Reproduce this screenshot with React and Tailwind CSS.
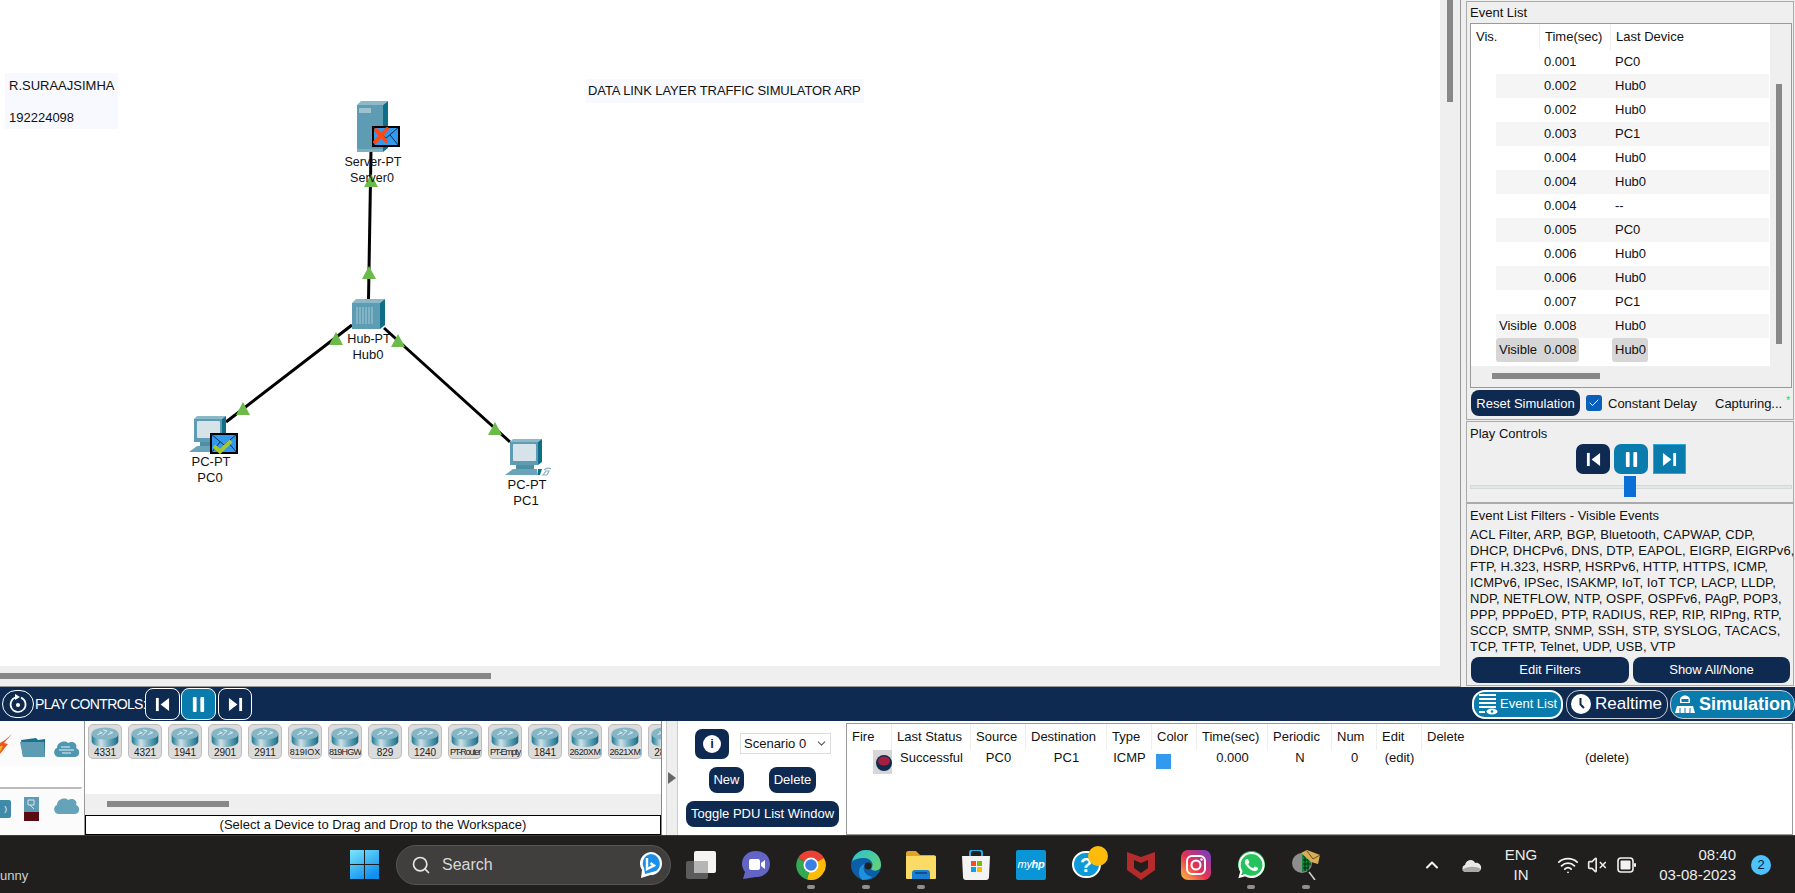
import React from "react";
import { Search, Wifi, VolumeX, ChevronUp, ChevronDown, Check } from "lucide-react";
import { FaWhatsapp } from "react-icons/fa";

const events = [
  ["", "0.001", "PC0"], ["", "0.002", "Hub0"], ["", "0.002", "Hub0"], ["", "0.003", "PC1"],
  ["", "0.004", "Hub0"], ["", "0.004", "Hub0"], ["", "0.004", "--"], ["", "0.005", "PC0"],
  ["", "0.006", "Hub0"], ["", "0.006", "Hub0"], ["", "0.007", "PC1"], ["Visible", "0.008", "Hub0"],
];

const filterLines = [
  "ACL Filter, ARP, BGP, Bluetooth, CAPWAP, CDP,",
  "DHCP, DHCPv6, DNS, DTP, EAPOL, EIGRP, EIGRPv6,",
  "FTP, H.323, HSRP, HSRPv6, HTTP, HTTPS, ICMP,",
  "ICMPv6, IPSec, ISAKMP, IoT, IoT TCP, LACP, LLDP,",
  "NDP, NETFLOW, NTP, OSPF, OSPFv6, PAgP, POP3,",
  "PPP, PPPoED, PTP, RADIUS, REP, RIP, RIPng, RTP,",
  "SCCP, SMTP, SNMP, SSH, STP, SYSLOG, TACACS,",
  "TCP, TFTP, Telnet, UDP, USB, VTP",
];

const devices = [
  ["4331", "text-[10px]"], ["4321", "text-[10px]"], ["1941", "text-[10px]"], ["2901", "text-[10px]"],
  ["2911", "text-[10px]"], ["819IOX", "text-[9px]"], ["819HGW", "text-[9px] tracking-[-0.8px]"],
  ["829", "text-[10px]"], ["1240", "text-[10px]"], ["PT-Router", "text-[9px] tracking-[-1.2px]"],
  ["PT-Empty", "text-[9px] tracking-[-1.2px]"], ["1841", "text-[10px]"],
  ["2620XM", "text-[9px] tracking-[-0.4px]"], ["2621XM", "text-[9px] tracking-[-0.4px]"], ["2811", "text-[10px]"],
];

function Tri({ x, y }) {
  return <polygon points={`${x},${y} ${x - 7},${y + 13} ${x + 7},${y + 13}`} fill="#6cbb4a" />;
}

function Envelope({ x, y, mark }) {
  return (
    <g transform={`translate(${x} ${y})`}>
      <rect x="1" y="1" width="26" height="19" fill="#3399ee" stroke="#000" strokeWidth="2" />
      <path d="M1 1 L14 12 L27 1 M1 20 L10 9 M27 20 L18 9" fill="none" stroke="#06223f" strokeWidth="0.9" />
      {mark === "x" ? (
        <path d="M3 16 L15 3 M4 4 L14 15" stroke="#ff4712" strokeWidth="4" strokeLinecap="round" />
      ) : (
        <path d="M4 13 L10 18.5 L21 8" fill="none" stroke="#a5c82c" strokeWidth="4" />
      )}
    </g>
  );
}

function PcIcon({ x, y }) {
  return (
    <g transform={`translate(${x} ${y})`}>
      <polygon points="0,3 3,0 32,0 28,3" fill="#8cb9c7" />
      <polygon points="28,3 32,0 32,23 28,26" fill="#0f6e88" />
      <rect x="0" y="3" width="28" height="23" fill="#5d9cb3" />
      <rect x="3" y="5" width="23" height="17" rx="1" fill="#d6e4ea" />
      <rect x="6" y="26" width="18" height="4" fill="#4e8ea6" />
      <polygon points="3,30 27,30 28,36 -5,36" fill="#6aa4b8" />
      <polygon points="28,30 32,30 30,36 28,36" fill="#0f6e88" />
      <path d="M34 31 q4 -3 7 -1 M33 36 l3 -4 h3 l-2 4 z" fill="none" stroke="#88b3c2" strokeWidth="1.2" />
    </g>
  );
}

function Diagram() {
  const labelClass = "fill-[#111]";
  return (
    <svg width="1440" height="666" className="absolute left-0 top-0" fontFamily="Liberation Sans, sans-serif" fontSize="13">
      <g stroke="#000" strokeWidth="3">
        <line x1="371" y1="150" x2="368.5" y2="300" />
        <line x1="352" y1="325" x2="226" y2="422" />
        <line x1="384" y1="328" x2="510" y2="442" />
      </g>
      <polygon points="357,105 361,101 388,101 383,105" fill="#8cb9c7" />
      <polygon points="383,105 388,101 388,148 383,152" fill="#0f6e88" />
      <rect x="357" y="105" width="26" height="47" fill="#5d9cb3" />
      <rect x="359" y="108" width="12" height="5" fill="#9cc2d0" />
      <rect x="357" y="149" width="26" height="3" fill="#7fb0c2" />
      <polygon points="352,303 356,299 385,299 380,303" fill="#8cb9c7" />
      <polygon points="380,303 385,299 385,325 380,329" fill="#0f6e88" />
      <rect x="352" y="303" width="28" height="26" fill="#5d9cb3" />
      <path d="M357 307 v17 M360 307 v17 M363 307 v17 M366 307 v17 M369 307 v17 M372 307 v17" stroke="#a9cbd7" strokeWidth="1" />
      <PcIcon x={194} y={416} />
      <PcIcon x={510} y={439} />
      <Tri x={371} y={174} />
      <Tri x={369} y={266} />
      <Tri x={336} y={332} />
      <Tri x={398} y={334} />
      <Tri x={243} y={402} />
      <Tri x={495} y={422} />
      <text x="373" y="166" textAnchor="middle" fontSize="12.5" className={labelClass}>Server-PT</text>
      <text x="372" y="182" textAnchor="middle" fontSize="12.5" className={labelClass}>Server0</text>
      <text x="369" y="343" textAnchor="middle" fontSize="12.6" className={labelClass}>Hub-PT</text>
      <text x="368" y="359" textAnchor="middle" className={labelClass}>Hub0</text>
      <text x="211" y="466" textAnchor="middle" className={labelClass}>PC-PT</text>
      <text x="210" y="482" textAnchor="middle" className={labelClass}>PC0</text>
      <text x="527" y="489" textAnchor="middle" className={labelClass}>PC-PT</text>
      <text x="526" y="505" textAnchor="middle" className={labelClass}>PC1</text>
      <Envelope x={372} y={126} mark="x" />
      <Envelope x={210} y={433} mark="check" />
    </svg>
  );
}

function Back({ size = 16 }) {
  return (
    <svg width={size} height={size} viewBox="0 0 16 16" fill="#fff">
      <rect x="1" y="1" width="3" height="14" />
      <polygon points="15,1 15,15 6,8" />
    </svg>
  );
}
function Forward({ size = 16 }) {
  return (
    <svg width={size} height={size} viewBox="0 0 16 16" fill="#fff">
      <rect x="12" y="1" width="3" height="14" />
      <polygon points="1,1 1,15 10,8" />
    </svg>
  );
}
function Pause({ size = 16 }) {
  return (
    <svg width={size} height={size} viewBox="0 0 16 16" fill="#fff">
      <rect x="2" y="0" width="4" height="16" rx="1" />
      <rect x="10" y="0" width="4" height="16" rx="1" />
    </svg>
  );
}

function Router() {
  return (
    <svg width="30" height="21" viewBox="0 0 30 21">
      <defs>
        <linearGradient id="routerBody" x1="0" x2="1" y1="0" y2="0">
          <stop offset="0" stopColor="#1d7a94" />
          <stop offset="0.35" stopColor="#cfe2e8" />
          <stop offset="0.65" stopColor="#6ea9bd" />
          <stop offset="1" stopColor="#156c86" />
        </linearGradient>
      </defs>
      <path d="M1 7 V15 C1 23 29 23 29 15 V7 Z" fill="url(#routerBody)" />
      <ellipse cx="15" cy="7" rx="14" ry="6.5" fill="#86b6c6" />
      <path d="M7 8 l5 -2 M9 5 l3 1 M18 8 l5 -2 M20 5 l3 1 M12 9 l5 -5 M13 3 l4 1" stroke="#e4f0f4" strokeWidth="1" fill="none" />
    </svg>
  );
}

function DeviceCard({ name, label }) {
  return (
    <div className="w-[34px] h-[35px] shrink-0 rounded-[5px] bg-[#dcdcdc] border border-[#bdbdbd] flex flex-col items-center pt-[2px] overflow-hidden">
      <Router />
      <span className={`leading-[11px] text-[#222] whitespace-nowrap ${label}`}>{name}</span>
    </div>
  );
}

function NavyButton({ className, children }) {
  return (
    <div className={`flex items-center justify-center rounded-[8px] bg-[#0f2a50] text-white text-[13px] ${className}`}>{children}</div>
  );
}

function EventTable() {
  return (
    <div className="w-[299px] h-[342px] bg-white text-[13px] text-[#111] overflow-hidden">
      <div className="h-[26px] flex items-center">
        <div className="w-[69px] pl-[5px] h-full flex items-center border-r border-[#eeeeee]">Vis.</div>
        <div className="w-[71px] pl-[5px] h-full flex items-center border-r border-[#eeeeee]">Time(sec)</div>
        <div className="pl-[5px]">Last Device</div>
      </div>
      <div className="ml-[25px] w-[273px]">
        {events.map(([vis, time, dev], i) => (
          <div key={i} className={`h-[24px] flex items-center ${i % 2 === 1 ? "bg-[#f5f5f5]" : "bg-white"}`}>
            <div className="w-[44px] pl-[3px]">{vis}</div>
            <div className="w-[71px] pl-[4px]">{time}</div>
            <div className="pl-[4px]">{dev}</div>
          </div>
        ))}
        <div className="h-[24px] flex items-center">
          <div className="w-[44px] h-full pl-[3px] flex items-center bg-[#d6d6d6] rounded-l-[3px]">Visible</div>
          <div className="w-[39px] h-full pl-[4px] flex items-center bg-[#d6d6d6] rounded-r-[3px]">0.008</div>
          <div className="ml-[33px] w-[36px] h-full pl-[3px] flex items-center bg-[#d6d6d6] rounded-[3px]">Hub0</div>
        </div>
      </div>
    </div>
  );
}

function RightPanels() {
  return (
    <div className="w-[328px] ml-[5px] pt-[1px] flex flex-col text-[13px] text-[#111]">
      <div className="h-[419px] border border-[#aaaaaa] pl-[3px] pr-[1px]">
        <div className="h-[21px] flex items-center">Event List</div>
        <div className="w-[322px] h-[365px] border border-[#999999] flex flex-col">
          <div className="flex">
            <EventTable />
            <div className="flex-1 pl-[6px] pt-[60px]">
              <div className="w-[6px] h-[260px] bg-[#888888]" />
            </div>
          </div>
          <div className="flex-1 pl-[21px] pt-[7px]">
            <div className="w-[108px] h-[6px] bg-[#888888]" />
          </div>
        </div>
        <div className="flex items-center h-[26px] mt-[2px] pl-[1px]">
          <NavyButton className="w-[109px] h-[26px] pt-[1px]">Reset Simulation</NavyButton>
          <div className="ml-[6px] w-[16px] h-[16px] rounded-[3px] bg-[#0a5fb8] flex items-center justify-center">
            <Check size={12} color="#fff" strokeWidth={2} />
          </div>
          <span className="ml-[6px] w-[107px] pt-[1px]">Constant Delay</span>
          <span className="whitespace-nowrap pt-[1px]">Capturing...</span>
          <span className="ml-[4px] -mt-[6px] text-[10px] text-[#22dd22]">*</span>
        </div>
      </div>
      <div className="mt-[1px] h-[82px] border border-[#aaaaaa] pl-[3px] pr-[1px]">
        <div className="h-[22px] pt-[2px] flex items-center">Play Controls</div>
        <div className="flex pl-[106px] h-[30px] gap-[4px]">
          <div className="w-[34px] h-[30px] rounded-[7px] bg-[#0f2a50] flex items-center justify-center"><Back size={15} /></div>
          <div className="w-[34px] h-[30px] rounded-[7px] bg-[#0a7bad] flex items-center justify-center"><Pause size={15} /></div>
          <div className="w-[33px] h-[30px] ml-[1px] bg-[#0a7bad] border border-[#28a9e0] flex items-center justify-center"><Forward size={15} /></div>
        </div>
        <div className="relative h-[24px] mt-[2px]">
          <div className="absolute left-0 right-0 top-[9px] h-[4px] bg-[#e2e7e7] border border-[#d4d8d8]" />
          <div className="absolute left-[154px] top-0 w-[12px] h-[21px] bg-[#0a70d8]" />
        </div>
      </div>
      <div className="h-[183px] border border-[#aaaaaa] pl-[3px] pr-[1px]">
        <div className="h-[23px] flex items-center">Event List Filters - Visible Events</div>
        <div className="text-[13px] tracking-[0.08px] leading-[16px] whitespace-nowrap h-[130px]">
          {filterLines.map((l) => <div key={l}>{l}</div>)}
        </div>
        <div className="flex gap-[4px] pl-[1px]">
          <NavyButton className="w-[158px] h-[26px]">Edit Filters</NavyButton>
          <NavyButton className="w-[157px] h-[26px]">Show All/None</NavyButton>
        </div>
      </div>
    </div>
  );
}

function ControlBar() {
  return (
    <div className="h-[34px] bg-[#0f2a50] flex items-center text-white relative">
      <div className="ml-[2px] w-[32px] h-[28px] rounded-full border border-white flex items-center justify-center shrink-0">
        <svg width="20" height="22" viewBox="0 0 20 22" fill="none" stroke="#fff" strokeWidth="1.7">
          <path d="M13 4.6 A7.5 7.5 0 1 1 8 4.3" />
          <polygon points="7,1 12,4 7,7" fill="#fff" stroke="none" />
          <circle cx="10" cy="12" r="1.2" fill="#fff" />
        </svg>
      </div>
      <span className="ml-[1px] w-[110px] text-[14px] tracking-[-0.65px] whitespace-nowrap">PLAY CONTROLS:</span>
      <div className="w-[35px] h-[32px] rounded-[8px] border border-white flex items-center justify-center"><Back size={15} /></div>
      <div className="ml-[1px] w-[35px] h-[32px] rounded-[8px] border border-white bg-[#0a7bad] flex items-center justify-center"><Pause size={15} /></div>
      <div className="ml-[2px] w-[34px] h-[32px] rounded-[8px] border border-white flex items-center justify-center"><Forward size={15} /></div>
      <div className="ml-auto flex items-center">
        <div className="w-[91px] h-[29px] rounded-[13px] border-2 border-white bg-[#0a7bad] flex items-center pl-[4px] gap-[2px]">
          <svg width="20" height="22" viewBox="0 0 20 22" fill="#fff">
            <rect x="1" y="1" width="17" height="2" /><rect x="1" y="5" width="17" height="2" />
            <rect x="1" y="9" width="17" height="2" /><rect x="1" y="13" width="17" height="2" />
            <rect x="1" y="18" width="6" height="2" />
            <ellipse cx="14" cy="18.5" rx="5.5" ry="3" /><circle cx="14" cy="18.5" r="1.3" fill="#0a7bad" />
          </svg>
          <span className="text-[13px] text-white whitespace-nowrap">Event List</span>
        </div>
        <div className="ml-[3px] w-[102px] h-[29px] rounded-[13px] border border-[#c8d0da] flex items-center pl-[3px] gap-[3px]">
          <svg width="22" height="22" viewBox="0 0 22 22">
            <circle cx="11" cy="11" r="10" fill="#fff" />
            <path d="M10.5 5 V11.5 L14 15" fill="none" stroke="#0f2a50" strokeWidth="2" />
          </svg>
          <span className="text-[17px] whitespace-nowrap">Realtime</span>
        </div>
        <div className="ml-[2px] w-[125px] h-[29px] rounded-l-[13px] rounded-r-[14px] border border-[#c8d0da] bg-[#0a7bad] flex items-center pl-[3px] gap-[3px]">
          <svg width="22" height="22" viewBox="0 0 22 22" fill="#fff">
            <path d="M6 10 V7 C6 1 16 1 16 7 V10 Z" />
            <rect x="7.5" y="6" width="7" height="3" fill="#0a7bad" />
            <path d="M3 13 H19 L21 20 H1 Z" />
            <path d="M6 15 V20 M11 15 V20 M16 15 V20" stroke="#0a7bad" strokeWidth="1" />
          </svg>
          <span className="text-[18px] font-bold whitespace-nowrap">Simulation</span>
        </div>
      </div>
    </div>
  );
}

function Categories() {
  return (
    <div className="w-[85px] h-full bg-[#fbfbfb] flex flex-col shrink-0 border-r border-[#999999]">
      <div className="h-[45px] flex items-end pb-[8px] relative">
        <svg width="12" height="22" viewBox="0 0 12 22" className="absolute left-0 top-[13px]">
          <polygon points="12,0 4,9 8,10 0,20 0,9 5,6" fill="#f0561d" />
          <polygon points="0,12 3,12 0,18" fill="#f5b32a" />
        </svg>
        <svg width="26" height="21" viewBox="0 0 26 21" className="ml-[20px]">
          <path d="M1 3 L16 1 L18 3 L25 2 V20 H3 Z" fill="#1b728f" />
          <path d="M0 5 H24 L25 20 H3 Z" fill="#5d9cb3" />
        </svg>
        <svg width="27" height="18" viewBox="0 0 27 18" className="ml-[7px]">
          <path d="M6 17 C0 17 0 9 4 8 C4 2 12 0 15 3 C20 0 25 4 23 8 C28 10 27 17 21 17 Z" fill="#4f97b1" />
          <path d="M8 7 H17 M6 10 H21 M9 13 H18" stroke="#b3d3de" strokeWidth="1.4" />
        </svg>
      </div>
      <div className="h-[23px] w-[82px] bg-white border-b-2 border-[#bbbbbb] rounded-r-[2px]" />
      <div className="h-[46px] flex items-start pt-[8px] relative">
        <div className="absolute left-0 top-[11px] w-[11px] h-[18px] bg-[#3f8aa6] rounded-r-[2px] text-[8px] text-white flex items-center justify-center">)</div>
        <svg width="16" height="24" viewBox="0 0 16 24" className="ml-[24px]">
          <rect x="0" y="0" width="15" height="15" fill="#5d9cb3" />
          <rect x="0" y="15" width="15" height="9" fill="#5a0a12" />
          <path d="M4 3 h6 v5 h-6 z M6 8 l4 4" stroke="#d8e6ec" fill="none" />
        </svg>
        <svg width="27" height="18" viewBox="0 0 27 18" className="ml-[13px]">
          <path d="M6 17 C0 17 0 9 4 8 C4 2 12 0 15 3 C20 0 25 4 23 8 C28 10 27 17 21 17 Z" fill="#64a3ba" />
        </svg>
      </div>
    </div>
  );
}

function DevicePanel() {
  return (
    <div className="w-[576px] h-full flex flex-col shrink-0">
      <div className="h-[73px] bg-white pl-[3px] pt-[3px] flex gap-[6px] overflow-hidden">
        {devices.map(([d, l]) => <DeviceCard key={d} name={d} label={l} />)}
      </div>
      <div className="h-[21px] bg-[#efefef] pl-[22px] pt-[7px]">
        <div className="w-[122px] h-[6px] bg-[#888888]" />
      </div>
      <div className="h-[20px] border border-black bg-white flex items-center justify-center text-[13px] text-[#111]">
        (Select a Device to Drag and Drop to the Workspace)
      </div>
    </div>
  );
}

function Scenario() {
  return (
    <div className="w-[168px] h-full bg-white shrink-0 flex flex-col text-[13px] pl-[8px]">
      <div className="flex items-start pt-[8px] pl-[9px]">
        <div className="w-[34px] h-[30px] rounded-[7px] bg-[#0f2a50] flex items-center justify-center">
          <div className="w-[18px] h-[18px] rounded-full bg-white flex items-center justify-center text-[13px] font-bold text-[#0f2a50]">i</div>
        </div>
        <div className="ml-[11px] mt-[4px] w-[91px] h-[21px] border border-[#dddddd] flex items-center pl-[3px] text-[#111]">
          Scenario 0
          <ChevronDown size={13} className="ml-[9px] text-[#555]" />
        </div>
      </div>
      <div className="flex mt-[8px] pl-[23px]">
        <NavyButton className="w-[35px] h-[26px]">New</NavyButton>
        <NavyButton className="ml-[25px] w-[47px] h-[26px]">Delete</NavyButton>
      </div>
      <NavyButton className="mt-[8px] w-[153px] h-[26px] whitespace-nowrap">Toggle PDU List Window</NavyButton>
    </div>
  );
}

const pduHead = [
  ["Fire", "w-[45px]"], ["Last Status", "w-[79px]"], ["Source", "w-[55px]"], ["Destination", "w-[81px]"],
  ["Type", "w-[45px]"], ["Color", "w-[45px]"], ["Time(sec)", "w-[71px]"], ["Periodic", "w-[64px]"],
  ["Num", "w-[45px]"], ["Edit", "w-[45px]"], ["Delete", "flex-1"],
];

function PduTable() {
  const cell = "flex items-center justify-center h-full -mt-[4px]";
  return (
    <div className="w-[947px] h-[112px] mt-[2px] border border-[#999999] bg-white text-[13px] text-[#111] shrink-0">
      <div className="flex h-[26px]">
        {pduHead.map(([t, w]) => (
          <div key={t} className={`${w} h-full pl-[5px] flex items-center border-r border-[#eeeeee]`}>{t}</div>
        ))}
      </div>
      <div className="flex h-[24px]">
        <div className="w-[45px] h-full flex justify-end">
          <div className="w-[19px] h-full bg-[#d6d6d6] flex items-center justify-end">
            <svg width="17" height="17" viewBox="0 0 17 17">
              <circle cx="9" cy="9" r="8" fill="#0f2a50" />
              <ellipse cx="9" cy="7" rx="6" ry="4.5" fill="#a81f3d" />
            </svg>
          </div>
        </div>
        <div className={`w-[79px] ${cell}`}>Successful</div>
        <div className={`w-[55px] ${cell}`}>PC0</div>
        <div className={`w-[81px] ${cell}`}>PC1</div>
        <div className={`w-[45px] ${cell}`}>ICMP</div>
        <div className="w-[45px] h-full pl-[4px] pt-[4px]"><div className="w-[15px] h-[15px] bg-[#3399ee]" /></div>
        <div className={`w-[71px] ${cell}`}>0.000</div>
        <div className={`w-[64px] ${cell}`}>N</div>
        <div className={`w-[45px] ${cell}`}>0</div>
        <div className={`w-[45px] ${cell}`}>(edit)</div>
        <div className={`flex-1 ${cell}`}>(delete)</div>
      </div>
    </div>
  );
}

function TaskIcon({ children, dot }) {
  return (
    <div className="relative w-[30px] h-[30px] flex items-center justify-center shrink-0">
      {children}
      {dot && <div className="absolute left-[11px] top-[35px] w-[8px] h-[4px] rounded-full bg-[#8f8f8f]" />}
    </div>
  );
}

function WinLogo() {
  return (
    <svg width="29" height="29" viewBox="0 0 29 29">
      <defs>
        <linearGradient id="winG" x1="0" y1="0" x2="0.6" y2="1">
          <stop offset="0" stopColor="#7ce6fb" />
          <stop offset="1" stopColor="#0f90ee" />
        </linearGradient>
      </defs>
      <path d="M0 0 H14 V14 H0 Z M15 0 H29 V14 H15 Z M0 15 H14 V29 H0 Z M15 15 H29 V29 H15 Z" fill="url(#winG)" />
    </svg>
  );
}

function BingIcon() {
  return (
    <svg width="25" height="28" viewBox="0 0 25 28">
      <path d="M12.5 1 A11.5 11.5 0 0 1 12.5 24 L3 27 L4 19 A11.5 11.5 0 0 1 12.5 1 Z" fill="#fff" />
      <path d="M12.5 3 A9.5 9.5 0 0 1 18 20 L7 23 L6 17 A9.5 9.5 0 0 1 12.5 3 Z" fill="#1b8fe8" />
      <path d="M9 7 V18 L16 14.5 L12.5 12" fill="none" stroke="#fff" strokeWidth="2.4" />
    </svg>
  );
}

function Taskbar() {
  return (
    <div className="h-[58px] bg-[#201f1d] border-t border-[#3a3a38] flex items-center relative text-[#e8e8e8]">
      <span className="w-[350px] shrink-0 pt-[22px] text-[13px] text-[#d0d0d0]">unny</span>
      <WinLogo />
      <div className="ml-[17px] w-[275px] h-[40px] rounded-full bg-[#403f3e] border border-[#565655] flex items-center pl-[14px] shrink-0">
        <Search size={20} color="#e4e4e4" strokeWidth={2} />
        <span className="ml-[11px] pt-[1px] text-[16px] text-[#d8d8d8] w-[196px]">Search</span>
        <BingIcon />
      </div>
      <div className="ml-[15px] flex gap-[25px] shrink-0">
        <TaskIcon>
          <svg width="30" height="28" viewBox="0 0 30 28">
            <rect x="0" y="10" width="22" height="18" rx="2" fill="#5c5c5c" />
            <rect x="8" y="0" width="22" height="22" rx="2" fill="#f4f4f4" />
            <rect x="8" y="10" width="14" height="12" fill="#b5b5b5" />
          </svg>
        </TaskIcon>
        <TaskIcon>
          <svg width="30" height="30" viewBox="0 0 30 30">
            <path d="M15 1 C24 1 29 7 29 14 C29 22 23 27 15 27 L2 29 L4 22 C2 19 1 17 1 14 C1 7 6 1 15 1 Z" fill="#6264c6" />
            <rect x="8" y="9" width="11" height="11" rx="2" fill="#fff" />
            <polygon points="20,13 24,10 24,19 20,16" fill="#fff" />
          </svg>
        </TaskIcon>
        <TaskIcon dot>
          <svg width="30" height="30" viewBox="0 0 30 30">
            <path d="M15 15 L2 8 A15 15 0 0 1 28 8 Z" fill="#ea4335" />
            <path d="M15 15 L2 8 A15 15 0 0 0 11 29.5 Z" fill="#34a853" />
            <path d="M15 15 L28 8 A15 15 0 0 1 11 29.5 Z" fill="#fbbc05" />
            <circle cx="15" cy="15" r="7.5" fill="#fff" />
            <circle cx="15" cy="15" r="5.8" fill="#3b7fe6" />
          </svg>
        </TaskIcon>
        <TaskIcon dot>
          <svg width="30" height="30" viewBox="0 0 30 30">
            <defs>
              <linearGradient id="edgeA" x1="0" y1="0" x2="1" y2="1">
                <stop offset="0" stopColor="#2bc3d2" />
                <stop offset="1" stopColor="#6cd36a" />
              </linearGradient>
            </defs>
            <circle cx="15" cy="15" r="15" fill="#0c5ea8" />
            <path d="M1 12 C3 3 10 0 15 0 C24 0 30 7 30 15 C30 21 23 22 20 19 C24 14 20 8 13 8 C8 8 3 9 1 12 Z" fill="url(#edgeA)" />
            <path d="M11 30 C6 25 7 15 14 14 C10 20 15 26 22 27 C19 29 15 30 11 30 Z" fill="#1e90dc" />
            <circle cx="17" cy="16" r="3.5" fill="#201f1d" />
          </svg>
        </TaskIcon>
        <TaskIcon dot>
          <svg width="30" height="30" viewBox="0 0 30 30">
            <path d="M0 3 C0 2 1 1 2 1 H10 L14 5 H28 C29 5 30 6 30 7 V12 H0 Z" fill="#e0a424" />
            <rect x="0" y="6" width="30" height="23" rx="1" fill="#fadb66" />
            <path d="M6 29 V23 C6 21 7 20 9 20 H21 C23 20 24 21 24 23 V29 Z" fill="#1a7fd0" />
            <rect x="9" y="22" width="12" height="2" fill="#0d4f8f" />
          </svg>
        </TaskIcon>
        <TaskIcon>
          <svg width="30" height="30" viewBox="0 0 30 30">
            <path d="M9 7 V3 C9 1 10 0 12 0 H18 C20 0 21 1 21 3 V7" fill="none" stroke="#2ba8e0" strokeWidth="2" />
            <path d="M1 6 H29 L28 27 C28 29 27 30 25 30 H5 C3 30 2 29 2 27 Z" fill="#f3f3f3" />
            <rect x="10" y="11" width="5" height="5" fill="#f25022" />
            <rect x="16" y="11" width="5" height="5" fill="#7fba00" />
            <rect x="10" y="17" width="5" height="5" fill="#00a4ef" />
            <rect x="16" y="17" width="5" height="5" fill="#ffb900" />
          </svg>
        </TaskIcon>
        <TaskIcon>
          <div className="w-[30px] h-[30px] bg-[#0a96d6] rounded-[2px] flex items-center justify-center text-[11px] italic text-white tracking-[-0.3px]">my<span className="font-bold">hp</span></div>
        </TaskIcon>
        <TaskIcon>
          <div className="w-[29px] h-[27px] rounded-full bg-[#0e9ad8] border-2 border-white flex items-center justify-center text-[20px] font-bold text-white">?</div>
          <div className="absolute left-[17px] -top-[4px] w-[20px] h-[20px] rounded-full bg-[#fdbb0a]" />
        </TaskIcon>
        <TaskIcon>
          <svg width="28" height="30" viewBox="0 0 28 30">
            <path d="M0 2 L14 7 L28 2 V20 L14 30 L0 20 Z" fill="#b52a2a" />
            <path d="M7 10 L14 13 L21 10 V18 L14 23 L7 18 Z" fill="#201f1d" />
          </svg>
        </TaskIcon>
        <TaskIcon>
          <svg width="30" height="30" viewBox="0 0 30 30">
            <defs>
              <linearGradient id="igG" x1="0" y1="1" x2="1" y2="0">
                <stop offset="0" stopColor="#fdc43f" />
                <stop offset="0.45" stopColor="#e8324f" />
                <stop offset="1" stopColor="#6a3fd0" />
              </linearGradient>
            </defs>
            <rect width="30" height="30" rx="7" fill="url(#igG)" />
            <rect x="6" y="6" width="18" height="18" rx="5" fill="none" stroke="#fff" strokeWidth="2" />
            <circle cx="15" cy="15" r="4.5" fill="none" stroke="#fff" strokeWidth="2" />
            <circle cx="20.5" cy="9.5" r="1.2" fill="#fff" />
          </svg>
        </TaskIcon>
        <TaskIcon dot>
          <div className="w-[27px] h-[27px] rounded-full bg-[#25c35c] flex items-center justify-center">
            <FaWhatsapp size={30} color="#fff" />
          </div>
        </TaskIcon>
        <TaskIcon dot>
          <svg width="30" height="30" viewBox="0 0 30 30">
            <circle cx="11" cy="13" r="10" fill="#8d8d8d" />
            <path d="M11 4 A9 9 0 0 1 11 22 Z" fill="#0f8a3a" />
            <path d="M12 6 H20 M12 10 H20 M12 14 H20 M12 18 H18 M14 4 V21 M17 4 V21" stroke="#062a10" strokeWidth="1" />
            <path d="M10 3 L16 0 L29 5 L27 14 L20 12 Z" fill="#d8ad55" />
            <path d="M16 1 L22 9 L29 5" fill="none" stroke="#6a5020" strokeWidth="1" />
            <path d="M18 22 L24 30" stroke="#cfcfcf" strokeWidth="1.6" />
          </svg>
        </TaskIcon>
      </div>
      <div className="ml-[101px] flex items-center shrink-0">
        <ChevronUp size={20} color="#f2f2f2" strokeWidth={2.5} />
        <svg width="20" height="14" viewBox="0 0 20 14" className="ml-[20px]">
          <path d="M4 14 C0 14 -1 8 3 7 C4 2 11 0 13 5 C17 4 20 8 19 11 C18 13 17 14 15 14 Z" fill="#e8e8e8" />
          <path d="M0 12 C5 8 14 8 19 11 C18 13 17 14 15 14 H4 C2 14 1 13 0 12 Z" fill="#a8a8a8" />
        </svg>
        <div className="ml-[22px] pt-[1px] w-[34px] flex flex-col items-center text-[15px] leading-[20px] text-[#ececec]">
          <span>ENG</span>
          <span>IN</span>
        </div>
        <Wifi size={22} color="#f2f2f2" className="ml-[19px]" />
        <VolumeX size={20} color="#e8e8e8" className="ml-[8px]" />
        <svg width="20" height="16" viewBox="0 0 20 16" className="ml-[10px]">
          <rect x="1" y="1" width="15" height="14" rx="3" fill="none" stroke="#f2f2f2" strokeWidth="1.6" />
          <rect x="3.5" y="3.5" width="10" height="9" rx="1" fill="#f2f2f2" />
          <rect x="17" y="6" width="2" height="4" rx="1" fill="#f2f2f2" />
        </svg>
        <div className="ml-[6px] pt-[1px] w-[93px] flex flex-col items-end text-[15px] leading-[20px] text-[#ececec]">
          <span>08:40</span>
          <span>03-08-2023</span>
        </div>
        <div className="ml-[15px] w-[20px] h-[20px] rounded-full bg-[#4cc2ff] text-[#102030] text-[13px] flex items-center justify-center">2</div>
      </div>
    </div>
  );
}

export default function App() {
  return (
    <div className="w-[1795px] h-[893px] overflow-hidden flex flex-col bg-white font-['Liberation_Sans',Arial,sans-serif]">
      <div className="h-[687px] flex bg-[#efefef] shrink-0">
        <div className="w-[1461px] h-full flex flex-col border-r border-b border-[#999999] shrink-0">
          <div className="flex h-[666px]">
            <div className="relative w-[1440px] h-full bg-white overflow-hidden">
              <Diagram />
              <div className="absolute left-[5px] top-[73px] w-[113px] h-[56px] bg-[#f8f8ff] text-[13px] text-[#111] pl-[4px] pt-[5px]">
                <div className="h-[32px] leading-[16px]">R.SURAAJSIMHA</div>
                <div className="leading-[16px]">192224098</div>
              </div>
              <div className="absolute left-[586px] top-[79px] w-[278px] h-[24px] bg-[#f8f8ff] text-[13px] text-[#111] tracking-[-0.09px] pl-[2px] flex items-center whitespace-nowrap">DATA LINK LAYER TRAFFIC SIMULATOR ARP</div>
            </div>
            <div className="flex-1 pl-[7px]">
              <div className="w-[6px] h-[102px] bg-[#888888]" />
            </div>
          </div>
          <div className="h-[20px] pt-[7px]">
            <div className="w-[491px] h-[6px] bg-[#888888]" />
          </div>
        </div>
        <RightPanels />
      </div>
      <ControlBar />
      <div className="h-[114px] flex bg-white shrink-0">
        <Categories />
        <DevicePanel />
        <div className="w-[5px] h-full border-l border-[#888888] bg-white shrink-0" />
        <div className="w-[12px] h-full bg-[#eeeeee] border-x border-[#cccccc] flex items-center justify-center shrink-0">
          <svg width="8" height="12" viewBox="0 0 8 12"><polygon points="0,0 8,6 0,12" fill="#666" /></svg>
        </div>
        <Scenario />
        <PduTable />
      </div>
      <Taskbar />
    </div>
  );
}
